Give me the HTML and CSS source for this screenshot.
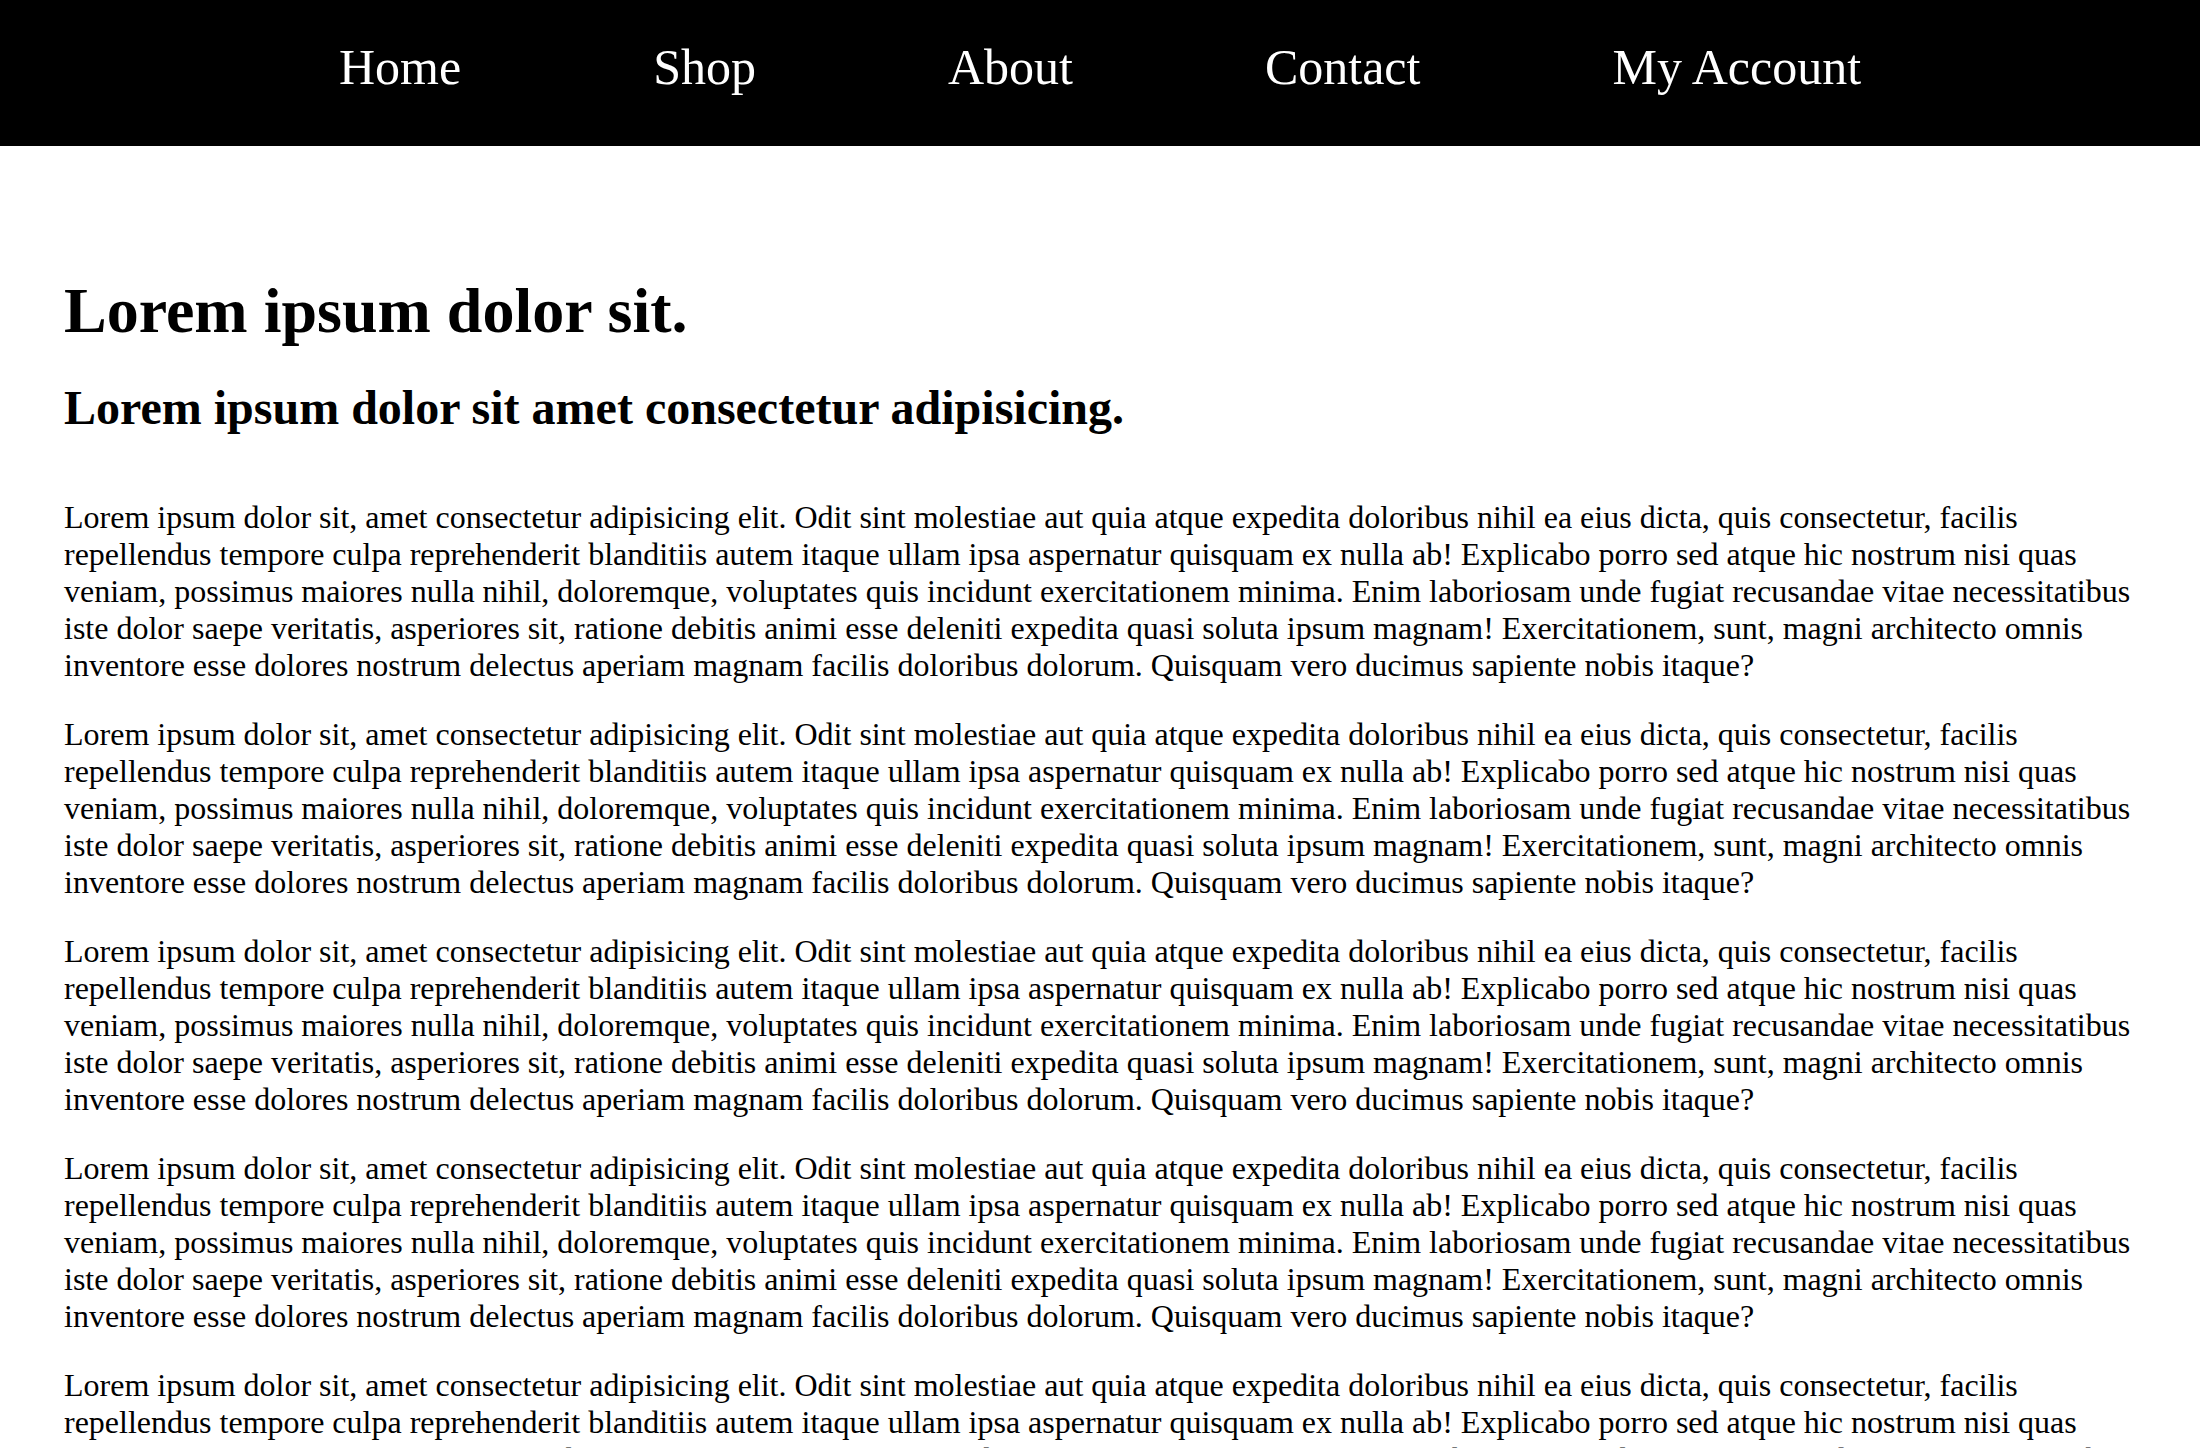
FILE: index.html
```html
<!DOCTYPE html>
<html lang="en">
<head>
<meta charset="utf-8">
<title>Lorem ipsum</title>
<link rel="stylesheet" href="styles.css">
</head>
<body>
<header class="site-header">
  <nav class="main-nav">
    <a class="nav-link" href="#">Home</a>
    <a class="nav-link" href="#">Shop</a>
    <a class="nav-link" href="#">About</a>
    <a class="nav-link" href="#">Contact</a>
    <a class="nav-link" href="#">My Account</a>
  </nav>
</header>
<main class="content">
  <h1 class="title">Lorem ipsum dolor sit.</h1>
  <h2 class="subtitle">Lorem ipsum dolor sit amet consectetur adipisicing.</h2>
  <p class="text">Lorem ipsum dolor sit, amet consectetur adipisicing elit. Odit sint molestiae aut quia atque expedita doloribus nihil ea eius dicta, quis consectetur, facilis repellendus tempore culpa reprehenderit blanditiis autem itaque ullam ipsa aspernatur quisquam ex nulla ab! Explicabo porro sed atque hic nostrum nisi quas veniam, possimus maiores nulla nihil, doloremque, voluptates quis incidunt exercitationem minima. Enim laboriosam unde fugiat recusandae vitae necessitatibus iste dolor saepe veritatis, asperiores sit, ratione debitis animi esse deleniti expedita quasi soluta ipsum magnam! Exercitationem, sunt, magni architecto omnis inventore esse dolores nostrum delectus aperiam magnam facilis doloribus dolorum. Quisquam vero ducimus sapiente nobis itaque?</p>
  <p class="text">Lorem ipsum dolor sit, amet consectetur adipisicing elit. Odit sint molestiae aut quia atque expedita doloribus nihil ea eius dicta, quis consectetur, facilis repellendus tempore culpa reprehenderit blanditiis autem itaque ullam ipsa aspernatur quisquam ex nulla ab! Explicabo porro sed atque hic nostrum nisi quas veniam, possimus maiores nulla nihil, doloremque, voluptates quis incidunt exercitationem minima. Enim laboriosam unde fugiat recusandae vitae necessitatibus iste dolor saepe veritatis, asperiores sit, ratione debitis animi esse deleniti expedita quasi soluta ipsum magnam! Exercitationem, sunt, magni architecto omnis inventore esse dolores nostrum delectus aperiam magnam facilis doloribus dolorum. Quisquam vero ducimus sapiente nobis itaque?</p>
  <p class="text">Lorem ipsum dolor sit, amet consectetur adipisicing elit. Odit sint molestiae aut quia atque expedita doloribus nihil ea eius dicta, quis consectetur, facilis repellendus tempore culpa reprehenderit blanditiis autem itaque ullam ipsa aspernatur quisquam ex nulla ab! Explicabo porro sed atque hic nostrum nisi quas veniam, possimus maiores nulla nihil, doloremque, voluptates quis incidunt exercitationem minima. Enim laboriosam unde fugiat recusandae vitae necessitatibus iste dolor saepe veritatis, asperiores sit, ratione debitis animi esse deleniti expedita quasi soluta ipsum magnam! Exercitationem, sunt, magni architecto omnis inventore esse dolores nostrum delectus aperiam magnam facilis doloribus dolorum. Quisquam vero ducimus sapiente nobis itaque?</p>
  <p class="text">Lorem ipsum dolor sit, amet consectetur adipisicing elit. Odit sint molestiae aut quia atque expedita doloribus nihil ea eius dicta, quis consectetur, facilis repellendus tempore culpa reprehenderit blanditiis autem itaque ullam ipsa aspernatur quisquam ex nulla ab! Explicabo porro sed atque hic nostrum nisi quas veniam, possimus maiores nulla nihil, doloremque, voluptates quis incidunt exercitationem minima. Enim laboriosam unde fugiat recusandae vitae necessitatibus iste dolor saepe veritatis, asperiores sit, ratione debitis animi esse deleniti expedita quasi soluta ipsum magnam! Exercitationem, sunt, magni architecto omnis inventore esse dolores nostrum delectus aperiam magnam facilis doloribus dolorum. Quisquam vero ducimus sapiente nobis itaque?</p>
  <p class="text">Lorem ipsum dolor sit, amet consectetur adipisicing elit. Odit sint molestiae aut quia atque expedita doloribus nihil ea eius dicta, quis consectetur, facilis repellendus tempore culpa reprehenderit blanditiis autem itaque ullam ipsa aspernatur quisquam ex nulla ab! Explicabo porro sed atque hic nostrum nisi quas veniam, possimus maiores nulla nihil, doloremque, voluptates quis incidunt exercitationem minima. Enim laboriosam unde fugiat recusandae vitae necessitatibus iste dolor saepe veritatis, asperiores sit, ratione debitis animi esse deleniti expedita quasi soluta ipsum magnam! Exercitationem, sunt, magni architecto omnis inventore esse dolores nostrum delectus aperiam magnam facilis doloribus dolorum. Quisquam vero ducimus sapiente nobis itaque?</p>
  <p class="text">Lorem ipsum dolor sit, amet consectetur adipisicing elit. Odit sint molestiae aut quia atque expedita doloribus nihil ea eius dicta, quis consectetur, facilis repellendus tempore culpa reprehenderit blanditiis autem itaque ullam ipsa aspernatur quisquam ex nulla ab! Explicabo porro sed atque hic nostrum nisi quas veniam, possimus maiores nulla nihil, doloremque, voluptates quis incidunt exercitationem minima. Enim laboriosam unde fugiat recusandae vitae necessitatibus iste dolor saepe veritatis, asperiores sit, ratione debitis animi esse deleniti expedita quasi soluta ipsum magnam! Exercitationem, sunt, magni architecto omnis inventore esse dolores nostrum delectus aperiam magnam facilis doloribus dolorum. Quisquam vero ducimus sapiente nobis itaque?</p>
</main>
</body>
</html>
```

FILE: styles.css
```css
html, body {
  margin: 0;
  padding: 0;
  background: #ffffff;
  color: #000000;
  font-family: "Liberation Serif", "Times New Roman", serif;
}

.site-header {
  background: #000000;
  height: 146px;
  box-sizing: border-box;
  padding-top: 38px;
}

.main-nav {
  display: flex;
  justify-content: center;
  gap: 192px;
}

.nav-link {
  color: #ffffff;
  text-decoration: none;
  font-size: 50px;
  line-height: normal;
}

.content {
  padding: 128px 64px 0;
}

.title {
  font-size: 64px;
  font-weight: bold;
  line-height: normal;
  margin: 0 0 32px;
}

.subtitle {
  font-size: 48px;
  font-weight: bold;
  line-height: normal;
  margin: 0 0 64px;
}

.text {
  font-size: 32px;
  line-height: normal;
  margin: 0 0 32px;
}
```
